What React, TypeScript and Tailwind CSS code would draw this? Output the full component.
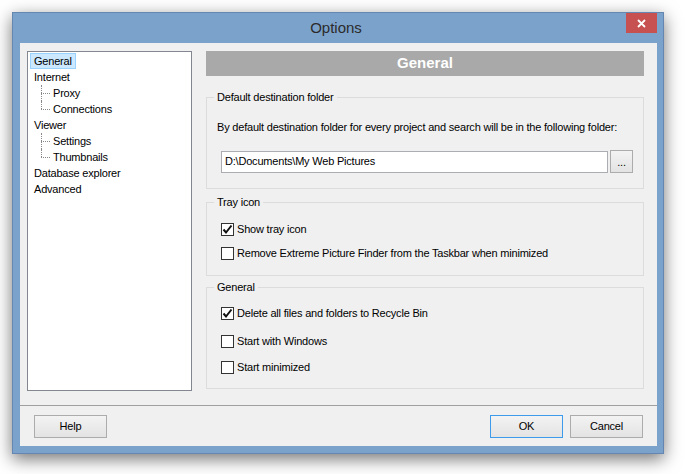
import React from 'react';

const font = { fontFamily: '"Liberation Sans", Arial, sans-serif' };

function CheckBox({ checked, label }: { checked?: boolean; label: string }) {
  return (
    <div className="flex items-center h-[14px]">
      <div className="w-[13px] h-[13px] bg-white border border-[#333333] flex items-center justify-center">
        {checked && (
          <svg width="11" height="11" viewBox="0 0 11 11">
            <path d="M1.5 5.5 L4 8.5 L9.5 1.5" fill="none" stroke="#111" strokeWidth="2" />
          </svg>
        )}
      </div>
      <span className="ml-[3px] text-[11px] leading-[14px] text-black">{label}</span>
    </div>
  );
}

function TreeChild({ label, last }: { label: string; last?: boolean }) {
  return (
    <div className="relative h-[16px] flex items-center pl-[23px]">
      <div
        className={`absolute left-[11px] top-0 border-l border-dotted border-[#888] ${
          last ? 'h-[8px]' : 'h-[16px]'
        }`}
      />
      <div className="absolute left-[11px] top-[8px] w-[9px] border-t border-dotted border-[#888]" />
      <span>{label}</span>
    </div>
  );
}

function WinButton({ label, primary }: { label: string; primary?: boolean }) {
  return (
    <button
      className={`w-[73px] h-[23px] text-[11px] text-black bg-gradient-to-b from-[#f3f3f3] to-[#e3e3e3] border ${
        primary ? 'border-[#3c9bea]' : 'border-[#acacac]'
      }`}
    >
      {label}
    </button>
  );
}

export default function App() {
  return (
    <div className="w-[685px] h-[474px] bg-white pl-[12px] pt-[12px]" style={font}>
      <div className="w-[652px] h-[442px] bg-[#7ba2cb] border border-[#6486b0] flex flex-col shadow-[0_5px_16px_rgba(0,0,0,0.55)]">
        {/* title bar */}
        <div className="h-[30px] flex items-start">
          <div className="w-[33px]" />
          <div className="flex-1 h-[30px] flex items-center justify-center text-[15px] text-[#2b2b2b]">
            Options
          </div>
          <div className="mr-[6px] w-[31px] h-[20px] bg-[#c75050] flex items-center justify-center">
            <svg width="9" height="9" viewBox="0 0 9 9">
              <path d="M1 1 L8 8 M8 1 L1 8" stroke="white" strokeWidth="1.8" />
            </svg>
          </div>
        </div>

        {/* client */}
        <div className="ml-[7px] mr-[6px] w-[637px] h-[403px] bg-[#f0f0f0] text-[11px] tracking-[-0.2px] text-black flex flex-col">
          <div className="flex pl-[7px] pt-[8px] h-[362px]">
            {/* tree */}
            <div className="w-[165px] h-[340px] bg-white border border-[#828790] pl-[2px] pt-[1px]">
              <div className="h-[16px] flex items-center">
                <span className="bg-[#cce8ff] border border-[#99d1ff] pl-[3px] pr-[3px] h-[16px] leading-[14px]">
                  General
                </span>
              </div>
              <div className="h-[16px] flex items-center pl-[4px]">Internet</div>
              <TreeChild label="Proxy" />
              <TreeChild label="Connections" last />
              <div className="h-[16px] flex items-center pl-[4px]">Viewer</div>
              <TreeChild label="Settings" />
              <TreeChild label="Thumbnails" last />
              <div className="h-[16px] flex items-center pl-[4px]">Database explorer</div>
              <div className="h-[16px] flex items-center pl-[4px]">Advanced</div>
            </div>

            {/* right panel */}
            <div className="ml-[14px] w-[438px] flex flex-col">
              <div className="h-[25px] bg-[#a9a9a9] flex items-center justify-center text-white font-bold text-[15px] tracking-normal">
                General
              </div>

              <div className="relative mt-[21px] h-[92px] border border-[#dcdcdc] pt-[22px]">
                <span className="absolute -top-[8px] left-[7px] px-[3px] bg-[#f0f0f0] leading-[14px]">
                  Default destination folder
                </span>
                <div className="pl-[10px] leading-[14px]">
                  By default destination folder for every project and search will be in the following folder:
                </div>
                <div className="flex items-center mt-[16px] pl-[14px]">
                  <div className="w-[387px] h-[22px] bg-white border border-[#abadb3] flex items-center pl-[3px]">
                    D:\Documents\My Web Pictures
                  </div>
                  <button className="ml-[2px] w-[23px] h-[23px] bg-gradient-to-b from-[#f3f3f3] to-[#e3e3e3] border border-[#acacac] text-[11px] leading-[14px]">
                    ...
                  </button>
                </div>
              </div>

              <div className="relative mt-[13px] h-[74px] border border-[#dcdcdc] pt-[19px] pl-[14px]">
                <span className="absolute -top-[8px] left-[7px] px-[3px] bg-[#f0f0f0] leading-[14px]">
                  Tray icon
                </span>
                <CheckBox checked label="Show tray icon" />
                <div className="mt-[10px]">
                  <CheckBox label="Remove Extreme Picture Finder from the Taskbar when minimized" />
                </div>
              </div>

              <div className="relative mt-[11px] h-[102px] border border-[#dcdcdc] pt-[18px] pl-[14px]">
                <span className="absolute -top-[8px] left-[7px] px-[3px] bg-[#f0f0f0] leading-[14px]">
                  General
                </span>
                <CheckBox checked label="Delete all files and folders to Recycle Bin" />
                <div className="mt-[14px]">
                  <CheckBox label="Start with Windows" />
                </div>
                <div className="mt-[12px]">
                  <CheckBox label="Start minimized" />
                </div>
              </div>
            </div>
          </div>

          <div className="h-[1px] bg-[#a0a0a0]" />

          <div className="flex items-center px-[14px] pt-[9px]">
            <WinButton label="Help" />
            <div className="flex-1" />
            <WinButton label="OK" primary />
            <div className="w-[7px]" />
            <WinButton label="Cancel" />
          </div>
        </div>
      </div>
    </div>
  );
}
